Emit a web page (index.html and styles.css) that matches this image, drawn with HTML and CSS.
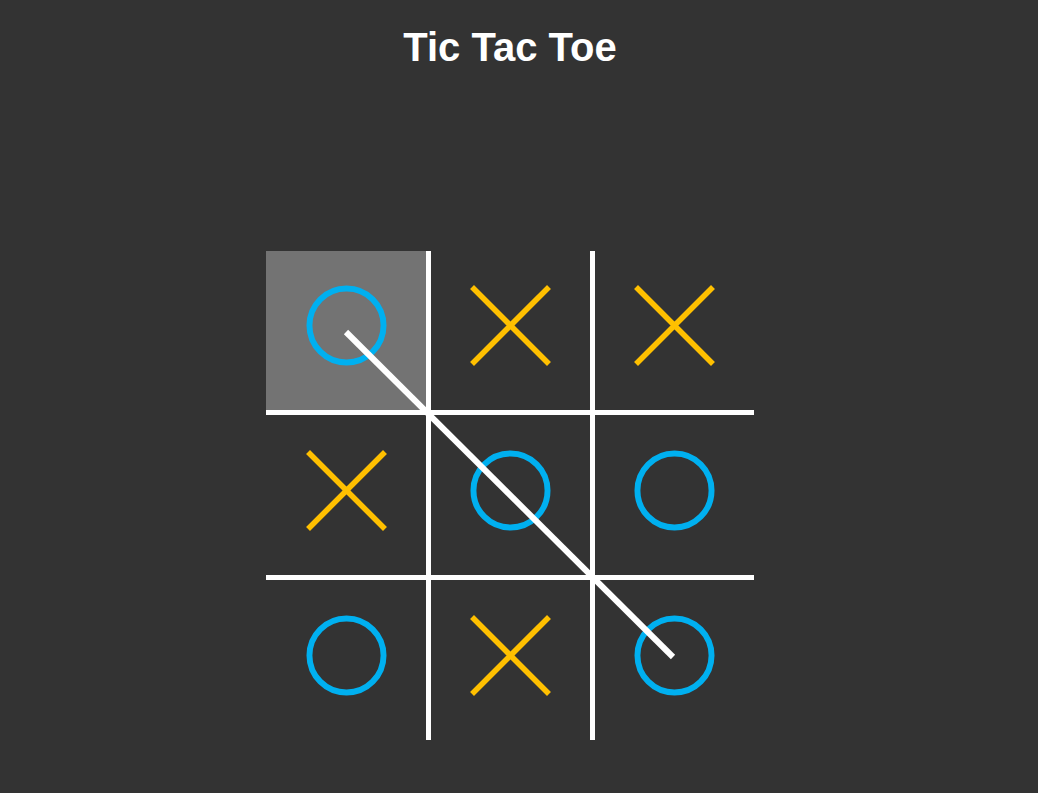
FILE: index.html
```html
<!DOCTYPE html>
<html lang="en">
<head>
    <meta charset="UTF-8">
    <meta name="viewport" content="width=device-width, initial-scale=1.0">
    <title>Tic Tac Toe</title>
    <link rel="stylesheet" href="styles.css">
</head>
<body>
    <div class="game">
        <h1 class="title">Tic Tac Toe</h1>

        <div class="board">
            <div class="cell highlight">
                <svg class="mark" viewBox="0 0 82 82"><circle class="o" cx="41" cy="41" r="37.5"/></svg>
            </div>
            <div class="cell">
                <svg class="mark" viewBox="0 0 80 80"><path class="x" d="M2 2 L78 78 M78 2 L2 78"/></svg>
            </div>
            <div class="cell">
                <svg class="mark" viewBox="0 0 80 80"><path class="x" d="M2 2 L78 78 M78 2 L2 78"/></svg>
            </div>

            <div class="cell">
                <svg class="mark" viewBox="0 0 80 80"><path class="x" d="M2 2 L78 78 M78 2 L2 78"/></svg>
            </div>
            <div class="cell">
                <svg class="mark" viewBox="0 0 82 82"><circle class="o" cx="41" cy="41" r="37.5"/></svg>
            </div>
            <div class="cell">
                <svg class="mark" viewBox="0 0 82 82"><circle class="o" cx="41" cy="41" r="37.5"/></svg>
            </div>

            <div class="cell">
                <svg class="mark" viewBox="0 0 82 82"><circle class="o" cx="41" cy="41" r="37.5"/></svg>
            </div>
            <div class="cell">
                <svg class="mark" viewBox="0 0 80 80"><path class="x" d="M2 2 L78 78 M78 2 L2 78"/></svg>
            </div>
            <div class="cell">
                <svg class="mark" viewBox="0 0 82 82"><circle class="o" cx="41" cy="41" r="37.5"/></svg>
            </div>

            <!-- winning strike across the diagonal -->
            <svg class="strike" viewBox="0 0 488 489">
                <line x1="80" y1="81" x2="407" y2="406"/>
            </svg>
        </div>
    </div>
</body>
</html>
```

FILE: styles.css
```css
* {
    margin: 0;
    padding: 0;
    box-sizing: border-box;
}

body {
    font-family: "Liberation Sans", Arial, sans-serif;
    background: #333333;
    color: #fff;
    min-height: 100vh;
}

.game {
    display: flex;
    flex-direction: column;
    align-items: center;
    padding-right: 18px;
}

.title {
    font-size: 40px;
    font-weight: 700;
    line-height: 46px;
    margin-top: 24px;
}

.board {
    position: relative;
    display: grid;
    grid-template-columns: 160px 159px 159px;
    grid-template-rows: 159px 160px 160px;
    gap: 5px;
    background: #fff;
    margin-top: 181px;
}

.cell {
    background: #333333;
    display: flex;
    align-items: center;
    justify-content: center;
    padding-bottom: 10px;
}

.cell.highlight {
    background: #737373;
}

.mark {
    width: 81px;
    height: 81px;
    display: block;
}

.mark .o {
    fill: none;
    stroke: #00b0f0;
    stroke-width: 6;
}

.mark .x {
    fill: none;
    stroke: #ffc000;
    stroke-width: 5.5;
}

.strike {
    position: absolute;
    top: 0;
    left: 0;
    width: 488px;
    height: 489px;
}

.strike line {
    stroke: #fff;
    stroke-width: 6;
}
```
